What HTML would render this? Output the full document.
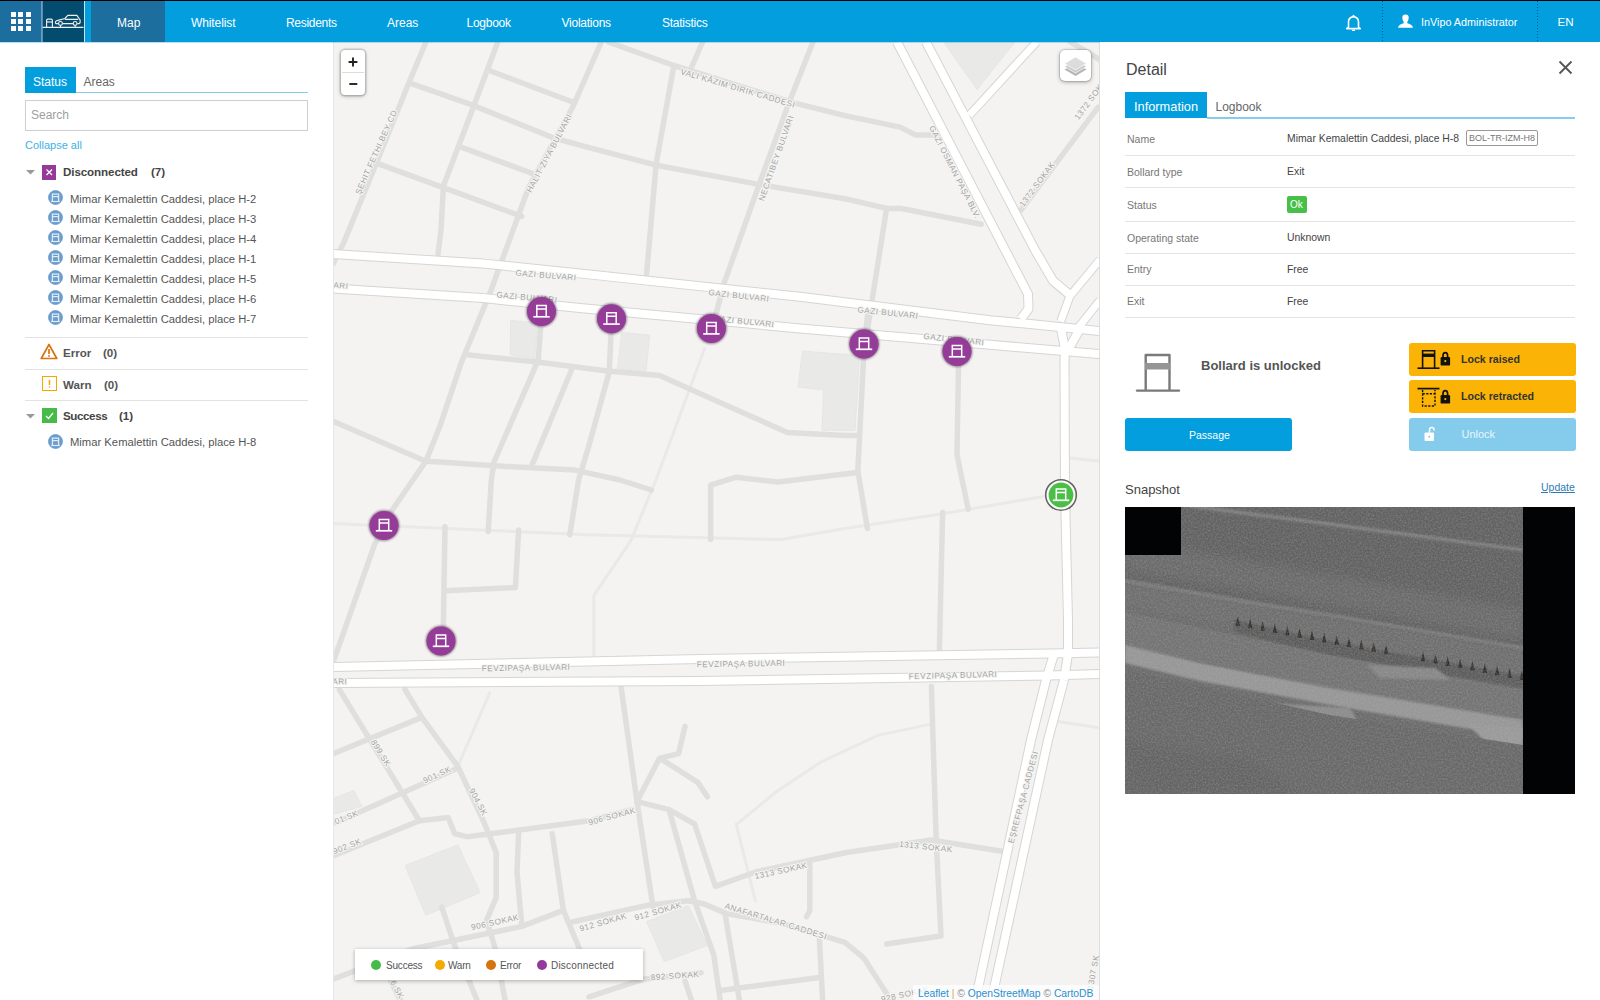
<!DOCTYPE html>
<html><head><meta charset="utf-8">
<style>
*{margin:0;padding:0;box-sizing:border-box}
html,body{width:1600px;height:1000px;overflow:hidden;background:#fff;font-family:"Liberation Sans", sans-serif;color:#444}
.abs{position:absolute}
.t{position:absolute;white-space:nowrap}
</style></head><body>
<div class="abs" style="left:0px;top:0px;width:1600px;height:1px;background:#000"></div>
<div class="abs" style="left:0px;top:1px;width:1600px;height:41px;background:#029ede"></div>
<div class="abs" style="left:0px;top:1px;width:41px;height:41px;background:#1b6e9e"></div>
<div class="abs" style="left:41px;top:1px;width:43px;height:41px;background:#034c70"></div>
<div class="abs" style="left:84px;top:1px;width:1px;height:41px;background:#cfe3ee"></div>
<div class="abs" style="left:91px;top:1px;width:74px;height:41px;background:#1b6e9e"></div>
<div class="abs" style="left:11.0px;top:11.5px;width:5px;height:5px;background:#fff"></div>
<div class="abs" style="left:18.4px;top:11.5px;width:5px;height:5px;background:#fff"></div>
<div class="abs" style="left:25.8px;top:11.5px;width:5px;height:5px;background:#fff"></div>
<div class="abs" style="left:11.0px;top:18.8px;width:5px;height:5px;background:#fff"></div>
<div class="abs" style="left:18.4px;top:18.8px;width:5px;height:5px;background:#fff"></div>
<div class="abs" style="left:25.8px;top:18.8px;width:5px;height:5px;background:#fff"></div>
<div class="abs" style="left:11.0px;top:26.1px;width:5px;height:5px;background:#fff"></div>
<div class="abs" style="left:18.4px;top:26.1px;width:5px;height:5px;background:#fff"></div>
<div class="abs" style="left:25.8px;top:26.1px;width:5px;height:5px;background:#fff"></div>
<svg class="abs" style="left:41px;top:1px" width="43" height="41" viewBox="0 0 43 41">
<rect x="0" y="0" width="1.8" height="41" fill="#6d9cc4"/>
<g fill="none" stroke="#eee" stroke-width="1.15" stroke-linejoin="round">
<path d="M5.6 26 V19.3 Q5.6 18.1 6.8 18.1 H10.2 Q11.4 18.1 11.4 19.3 V26"/>
<path d="M5.6 21 H11.4"/>
<path d="M17.6 22.6 H15.2 Q14.3 22.3 14.4 21 Q14.8 19.9 16 19.6 L23.9 17.5 L26.8 14.4 H35.9 L39.1 19 Q39.6 21.8 38.3 22.6 H36.2"/>
<path d="M23.9 18.4 H37.2 M21.5 22.6 H32"/>
<circle cx="19.5" cy="22.4" r="1.9"/><circle cx="34.1" cy="22.4" r="1.9"/>
<path d="M19.5 24.3 V26 M34.1 24.3 V26"/>
<path d="M1.5 26.3 H42.5" stroke-width="1.3"/>
</g></svg>
<div class="t" style="left:117px;top:17.04px;font-size:12px;line-height:12px;color:#fff;font-weight:400;">Map</div>
<div class="t" style="left:191px;top:17.04px;font-size:12px;line-height:12px;color:#fff;font-weight:400;letter-spacing:-0.1px">Whitelist</div>
<div class="t" style="left:286px;top:17.04px;font-size:12px;line-height:12px;color:#fff;font-weight:400;letter-spacing:-0.3px">Residents</div>
<div class="t" style="left:387px;top:17.04px;font-size:12px;line-height:12px;color:#fff;font-weight:400;">Areas</div>
<div class="t" style="left:466.5px;top:17.04px;font-size:12px;line-height:12px;color:#fff;font-weight:400;letter-spacing:-0.25px">Logbook</div>
<div class="t" style="left:561.5px;top:17.04px;font-size:12px;line-height:12px;color:#fff;font-weight:400;letter-spacing:-0.25px">Violations</div>
<div class="t" style="left:662px;top:17.04px;font-size:12px;line-height:12px;color:#fff;font-weight:400;letter-spacing:-0.25px">Statistics</div>
<div class="abs" style="left:1382px;top:1px;width:1px;height:41px;background:repeating-linear-gradient(to bottom,rgba(0,40,80,.55) 0 1px,transparent 1px 3px)"></div>
<div class="abs" style="left:1537px;top:1px;width:1px;height:41px;background:repeating-linear-gradient(to bottom,rgba(0,40,80,.55) 0 1px,transparent 1px 3px)"></div>
<svg class="abs" style="left:1345px;top:13px" width="17" height="19" viewBox="0 0 17 19">
<path d="M3.5 14.2 V9 Q3.5 4.2 8.5 3.6 Q13.5 4.2 13.5 9 V14.2 L15.3 15.6 H1.7 Z" fill="none" stroke="#fff" stroke-width="1.6" stroke-linejoin="round"/>
<circle cx="8.5" cy="2.8" r="1" fill="#fff"/>
<rect x="7" y="16.6" width="3" height="1.4" fill="#fff"/>
</svg>
<svg class="abs" style="left:1397px;top:14px" width="17" height="15" viewBox="0 0 17 15">
<path d="M5.3 3.5 Q5.3 0.5 8.5 0.5 Q11.7 0.5 11.7 3.5 Q11.7 6.5 10.3 8 V9.2 Q15.5 10.3 16 13.8 H1 Q1.5 10.3 6.7 9.2 V8 Q5.3 6.5 5.3 3.5 Z" fill="#fff"/>
</svg>
<div class="t" style="left:1421px;top:16.66px;font-size:10.8px;line-height:10.8px;color:#fff;font-weight:400;">InVipo Administrator</div>
<div class="t" style="left:1557.5px;top:15.68px;font-size:11.6px;line-height:11.6px;color:#fff;font-weight:400;">EN</div>
<div class="abs" style="left:0px;top:42px;width:333px;height:958px;background:#fff"></div>
<div class="abs" style="left:24.5px;top:67px;width:51px;height:26px;background:#029ede"></div>
<div class="t" style="left:33px;top:75.84px;font-size:12px;line-height:12px;color:#fff;font-weight:400;">Status</div>
<div class="t" style="left:83.5px;top:75.84px;font-size:12px;line-height:12px;color:#666;font-weight:400;">Areas</div>
<div class="abs" style="left:75.5px;top:92px;width:232px;height:1px;background:#86cdeb"></div>
<div class="abs" style="left:24.5px;top:100px;width:283px;height:31px;border:1px solid #cfcfcf;background:#fff"></div>
<div class="t" style="left:31px;top:108.84px;font-size:12px;line-height:12px;color:#a0a0a0;font-weight:400;">Search</div>
<div class="t" style="left:25px;top:139.69px;font-size:11px;line-height:11px;color:#3eb1e3;font-weight:400;">Collapse all</div>
<svg class="abs" style="left:26px;top:170px" width="9" height="5"><path d="M0 0 H9 L4.5 4.5 Z" fill="#999"/></svg>
<div class="abs" style="left:41.5px;top:165px;width:14.5px;height:14.5px;background:#933a9a"></div>
<svg class="abs" style="left:41.5px;top:165px" width="15" height="15"><path d="M4.5 4.5 L10 10 M10 4.5 L4.5 10" stroke="#fff" stroke-width="1.3"/></svg>
<div class="t" style="left:63px;top:166.18px;font-size:11.6px;line-height:11.6px;color:#444;font-weight:700;letter-spacing:-0.1px">Disconnected</div>
<div class="t" style="left:151px;top:166.18px;font-size:11.6px;line-height:11.6px;color:#444;font-weight:700;">(7)</div>
<svg class="abs" style="left:48.1px;top:190.3px" width="15" height="15" viewBox="0 0 15 15">
<circle cx="7.5" cy="7.5" r="7" fill="#6d9cca" stroke="#5a95d0" stroke-width=".7"/>
<path d="M4.4 11.2 V4.2 H10.6 V11.2 M4.4 6.6 H10.6" fill="none" stroke="#dcecf8" stroke-width="1.3"/>
<path d="M3.2 11.5 H11.8" stroke="#dcecf8" stroke-width="1.2"/>
</svg>
<div class="t" style="left:70px;top:193.98px;font-size:11.25px;line-height:11.25px;color:#555;font-weight:400;">Mimar Kemalettin Caddesi, place H-2</div>
<svg class="abs" style="left:48.1px;top:210.3px" width="15" height="15" viewBox="0 0 15 15">
<circle cx="7.5" cy="7.5" r="7" fill="#6d9cca" stroke="#5a95d0" stroke-width=".7"/>
<path d="M4.4 11.2 V4.2 H10.6 V11.2 M4.4 6.6 H10.6" fill="none" stroke="#dcecf8" stroke-width="1.3"/>
<path d="M3.2 11.5 H11.8" stroke="#dcecf8" stroke-width="1.2"/>
</svg>
<div class="t" style="left:70px;top:213.98px;font-size:11.25px;line-height:11.25px;color:#555;font-weight:400;">Mimar Kemalettin Caddesi, place H-3</div>
<svg class="abs" style="left:48.1px;top:230.3px" width="15" height="15" viewBox="0 0 15 15">
<circle cx="7.5" cy="7.5" r="7" fill="#6d9cca" stroke="#5a95d0" stroke-width=".7"/>
<path d="M4.4 11.2 V4.2 H10.6 V11.2 M4.4 6.6 H10.6" fill="none" stroke="#dcecf8" stroke-width="1.3"/>
<path d="M3.2 11.5 H11.8" stroke="#dcecf8" stroke-width="1.2"/>
</svg>
<div class="t" style="left:70px;top:233.98px;font-size:11.25px;line-height:11.25px;color:#555;font-weight:400;">Mimar Kemalettin Caddesi, place H-4</div>
<svg class="abs" style="left:48.1px;top:250.3px" width="15" height="15" viewBox="0 0 15 15">
<circle cx="7.5" cy="7.5" r="7" fill="#6d9cca" stroke="#5a95d0" stroke-width=".7"/>
<path d="M4.4 11.2 V4.2 H10.6 V11.2 M4.4 6.6 H10.6" fill="none" stroke="#dcecf8" stroke-width="1.3"/>
<path d="M3.2 11.5 H11.8" stroke="#dcecf8" stroke-width="1.2"/>
</svg>
<div class="t" style="left:70px;top:253.98px;font-size:11.25px;line-height:11.25px;color:#555;font-weight:400;">Mimar Kemalettin Caddesi, place H-1</div>
<svg class="abs" style="left:48.1px;top:270.3px" width="15" height="15" viewBox="0 0 15 15">
<circle cx="7.5" cy="7.5" r="7" fill="#6d9cca" stroke="#5a95d0" stroke-width=".7"/>
<path d="M4.4 11.2 V4.2 H10.6 V11.2 M4.4 6.6 H10.6" fill="none" stroke="#dcecf8" stroke-width="1.3"/>
<path d="M3.2 11.5 H11.8" stroke="#dcecf8" stroke-width="1.2"/>
</svg>
<div class="t" style="left:70px;top:273.98px;font-size:11.25px;line-height:11.25px;color:#555;font-weight:400;">Mimar Kemalettin Caddesi, place H-5</div>
<svg class="abs" style="left:48.1px;top:290.3px" width="15" height="15" viewBox="0 0 15 15">
<circle cx="7.5" cy="7.5" r="7" fill="#6d9cca" stroke="#5a95d0" stroke-width=".7"/>
<path d="M4.4 11.2 V4.2 H10.6 V11.2 M4.4 6.6 H10.6" fill="none" stroke="#dcecf8" stroke-width="1.3"/>
<path d="M3.2 11.5 H11.8" stroke="#dcecf8" stroke-width="1.2"/>
</svg>
<div class="t" style="left:70px;top:293.98px;font-size:11.25px;line-height:11.25px;color:#555;font-weight:400;">Mimar Kemalettin Caddesi, place H-6</div>
<svg class="abs" style="left:48.1px;top:310.3px" width="15" height="15" viewBox="0 0 15 15">
<circle cx="7.5" cy="7.5" r="7" fill="#6d9cca" stroke="#5a95d0" stroke-width=".7"/>
<path d="M4.4 11.2 V4.2 H10.6 V11.2 M4.4 6.6 H10.6" fill="none" stroke="#dcecf8" stroke-width="1.3"/>
<path d="M3.2 11.5 H11.8" stroke="#dcecf8" stroke-width="1.2"/>
</svg>
<div class="t" style="left:70px;top:313.98px;font-size:11.25px;line-height:11.25px;color:#555;font-weight:400;">Mimar Kemalettin Caddesi, place H-7</div>
<div class="abs" style="left:24.5px;top:337px;width:283px;height:1px;background:#e3e3e3"></div>
<svg class="abs" style="left:40px;top:343px" width="18" height="17" viewBox="0 0 18 17"><path d="M9 1.5 L16.8 15.5 H1.2 Z" fill="none" stroke="#d9730d" stroke-width="1.7" stroke-linejoin="round"/><path d="M9 6 V11" stroke="#d9730d" stroke-width="1.7"/><circle cx="9" cy="13" r="0.9" fill="#d9730d"/></svg>
<div class="t" style="left:63px;top:346.78px;font-size:11.6px;line-height:11.6px;color:#555;font-weight:700;">Error</div>
<div class="t" style="left:103px;top:346.78px;font-size:11.6px;line-height:11.6px;color:#555;font-weight:700;">(0)</div>
<div class="abs" style="left:24.5px;top:368.5px;width:283px;height:1px;background:#e3e3e3"></div>
<div class="abs" style="left:41.5px;top:376px;width:15px;height:15px;border:1.7px solid #f5a700"></div>
<svg class="abs" style="left:41.5px;top:376px" width="15" height="15"><path d="M7.5 4 V9" stroke="#f5a700" stroke-width="1.5"/><circle cx="7.5" cy="11" r=".8" fill="#f5a700"/></svg>
<div class="t" style="left:63px;top:378.58px;font-size:11.6px;line-height:11.6px;color:#555;font-weight:700;">Warn</div>
<div class="t" style="left:104px;top:378.58px;font-size:11.6px;line-height:11.6px;color:#555;font-weight:700;">(0)</div>
<div class="abs" style="left:24.5px;top:400px;width:283px;height:1px;background:#e3e3e3"></div>
<svg class="abs" style="left:26px;top:414px" width="9" height="5"><path d="M0 0 H9 L4.5 4.5 Z" fill="#999"/></svg>
<div class="abs" style="left:41.5px;top:408px;width:15px;height:15px;background:#47bb47"></div>
<svg class="abs" style="left:41.5px;top:408px" width="15" height="15"><path d="M4 8 L6.5 10.5 L11 5" fill="none" stroke="#fff" stroke-width="1.3"/></svg>
<div class="t" style="left:63px;top:410.48px;font-size:11.6px;line-height:11.6px;color:#444;font-weight:700;letter-spacing:-0.4px">Success</div>
<div class="t" style="left:119px;top:410.48px;font-size:11.6px;line-height:11.6px;color:#444;font-weight:700;">(1)</div>
<svg class="abs" style="left:48.0px;top:434.1px" width="15" height="15" viewBox="0 0 15 15">
<circle cx="7.5" cy="7.5" r="7" fill="#6d9cca" stroke="#5a95d0" stroke-width=".7"/>
<path d="M4.4 11.2 V4.2 H10.6 V11.2 M4.4 6.6 H10.6" fill="none" stroke="#dcecf8" stroke-width="1.3"/>
<path d="M3.2 11.5 H11.8" stroke="#dcecf8" stroke-width="1.2"/>
</svg>
<div class="t" style="left:70px;top:437.48px;font-size:11.25px;line-height:11.25px;color:#555;font-weight:400;">Mimar Kemalettin Caddesi, place H-8</div>
<div id="map" class="abs" style="left:333px;top:42px;width:766px;height:958px;background:#f4f3f1;overflow:hidden">
<svg class="abs" style="left:0;top:0" width="766" height="958" viewBox="333 42 766 958">
<polygon points="510.6,320.4 537.8,323 534.5,358.5 510.2,354.9" fill="#e9e9e7" stroke="#e3e3e1" stroke-width="0.8"/>
<polygon points="621.8,332.4 649.7,335.1 646.1,371.1 617.3,369.3" fill="#e9e9e7" stroke="#e3e3e1" stroke-width="0.8"/>
<polygon points="802.5,351 859.5,355.5 855,430.5 822,430.5 823.5,390 798,387" fill="#e9e9e7" stroke="#e3e3e1" stroke-width="0.8"/>
<polygon points="943.6,42 1014.9,42 977.2,89.5" fill="#e9e9e7" stroke="#e3e3e1" stroke-width="0.8"/>
<polygon points="405,865.6 457.8,844.8 480.2,892.8 425.8,915.2" fill="#e9e9e7" stroke="#e3e3e1" stroke-width="0.8"/>
<polygon points="333,798.4 353.8,790.4 361.8,806.4 333,814.4" fill="#e9e9e7" stroke="#e3e3e1" stroke-width="0.8"/>
<polygon points="646.6,921.6 688.2,905.6 707.4,945.6 664.2,961.6" fill="#e9e9e7" stroke="#e3e3e1" stroke-width="0.8"/>
<polyline points="333,523.6 589,534.8 781,539.6 845,528.4 941,514 1043.4,496.4" fill="none" stroke="#e9e9e7" stroke-width="3" stroke-linejoin="round" stroke-linecap="round"/>
<polyline points="704.6,348.6 656,480 630.6,541.2 593.8,595.6 593.8,656.4" fill="none" stroke="#e9e9e7" stroke-width="3" stroke-linejoin="round" stroke-linecap="round"/>
<polyline points="489.8,692.8 457.8,766.4" fill="none" stroke="#e9e9e7" stroke-width="3" stroke-linejoin="round" stroke-linecap="round"/>
<polyline points="736.2,824 755.4,900.8" fill="none" stroke="#e9e9e7" stroke-width="3" stroke-linejoin="round" stroke-linecap="round"/>
<polyline points="737.4,823.6 777,791.2 820.2,762.4 877.9,735.4 928.3,724.6" fill="none" stroke="#e9e9e7" stroke-width="3" stroke-linejoin="round" stroke-linecap="round"/>
<polyline points="1069,458 1101,461.2" fill="none" stroke="#e9e9e7" stroke-width="3" stroke-linejoin="round" stroke-linecap="round"/>
<polyline points="1057.8,721.6 1101,728" fill="none" stroke="#e9e9e7" stroke-width="3" stroke-linejoin="round" stroke-linecap="round"/>
<polyline points="426,42 408,85 376,164 343.8,242.6 333,264" fill="none" stroke="#dfdfdd" stroke-width="5.5" stroke-linejoin="round" stroke-linecap="round"/>
<polyline points="497.8,42 473.8,106 443.4,186 441,230 438,254" fill="none" stroke="#dfdfdd" stroke-width="5.5" stroke-linejoin="round" stroke-linecap="round"/>
<polyline points="601.3,42 573,106.5 529,186.5 490.4,292 461.5,362 440,426 425.8,461.2 390.6,512.4 374.6,544.4 341,640 333.6,660.6" fill="none" stroke="#dfdfdd" stroke-width="5.5" stroke-linejoin="round" stroke-linecap="round"/>
<polyline points="489.8,70.8 574.6,102.8" fill="none" stroke="#dfdfdd" stroke-width="5.5" stroke-linejoin="round" stroke-linecap="round"/>
<polyline points="411.4,83.6 470.6,104.4 553.8,138 589,147.6 656.2,165.2 758.6,184.4 845,198.8 886.6,208.4 900,208.3 981.2,224.2" fill="none" stroke="#dfdfdd" stroke-width="5.5" stroke-linejoin="round" stroke-linecap="round"/>
<polyline points="462.6,147.6 531.4,173.2" fill="none" stroke="#dfdfdd" stroke-width="5.5" stroke-linejoin="round" stroke-linecap="round"/>
<polyline points="377.8,163.6 443.4,187.6 521.8,216.4" fill="none" stroke="#dfdfdd" stroke-width="5.5" stroke-linejoin="round" stroke-linecap="round"/>
<polyline points="608.2,42 675.4,66 793.8,102.8 845,115.6 900,127.1 915.8,135.1 937.6,135.1" fill="none" stroke="#dfdfdd" stroke-width="5.5" stroke-linejoin="round" stroke-linecap="round"/>
<polyline points="702.6,42 691.4,67.6" fill="none" stroke="#dfdfdd" stroke-width="5.5" stroke-linejoin="round" stroke-linecap="round"/>
<polyline points="673.8,66 656.2,163.6 646.6,274" fill="none" stroke="#dfdfdd" stroke-width="5.5" stroke-linejoin="round" stroke-linecap="round"/>
<polyline points="813,42 789,102.8 758.6,186 723.4,285.2 715,318" fill="none" stroke="#dfdfdd" stroke-width="5.5" stroke-linejoin="round" stroke-linecap="round"/>
<polyline points="886.6,208.4 867.4,330" fill="none" stroke="#dfdfdd" stroke-width="5.5" stroke-linejoin="round" stroke-linecap="round"/>
<polyline points="1098,107.3 1020.8,210.3" fill="none" stroke="#dfdfdd" stroke-width="5.5" stroke-linejoin="round" stroke-linecap="round"/>
<polyline points="1070.3,42 1100,59.8" fill="none" stroke="#dfdfdd" stroke-width="5.5" stroke-linejoin="round" stroke-linecap="round"/>
<polyline points="540.8,325.2 538.1,361.2 535.4,366.6 494,462 491.3,480 488.2,531.6" fill="none" stroke="#dfdfdd" stroke-width="5.5" stroke-linejoin="round" stroke-linecap="round"/>
<polyline points="571.4,370.2 531.8,465.6" fill="none" stroke="#dfdfdd" stroke-width="5.5" stroke-linejoin="round" stroke-linecap="round"/>
<polyline points="611,334.2 609.2,372 589,445.2 578.6,480 569.8,534.8" fill="none" stroke="#dfdfdd" stroke-width="5.5" stroke-linejoin="round" stroke-linecap="round"/>
<polyline points="468.8,354.9 537.2,362.1 607.4,371.1 659.6,375.6 720,402.6 787.4,432.4 845,435.6 857.8,435.6" fill="none" stroke="#dfdfdd" stroke-width="5.5" stroke-linejoin="round" stroke-linecap="round"/>
<polyline points="333,421.2 425.8,461.2 440,462 490.4,465.6 575,470.1 620,480 651.4,490" fill="none" stroke="#dfdfdd" stroke-width="5.5" stroke-linejoin="round" stroke-linecap="round"/>
<polyline points="445,526.8 443.4,624.4" fill="none" stroke="#dfdfdd" stroke-width="5.5" stroke-linejoin="round" stroke-linecap="round"/>
<polyline points="445,590.8 515.4,587.6 518.6,530" fill="none" stroke="#dfdfdd" stroke-width="5.5" stroke-linejoin="round" stroke-linecap="round"/>
<polyline points="710.6,539.6 710.6,485.2 736.2,477.2 777.8,482 845,474 857.8,472.4" fill="none" stroke="#dfdfdd" stroke-width="5.5" stroke-linejoin="round" stroke-linecap="round"/>
<polyline points="867.7,314.2 866.2,327.7" fill="none" stroke="#dfdfdd" stroke-width="5.5" stroke-linejoin="round" stroke-linecap="round"/>
<polyline points="864,350 857.8,470.8 867.4,528.4" fill="none" stroke="#dfdfdd" stroke-width="5.5" stroke-linejoin="round" stroke-linecap="round"/>
<polyline points="958.6,360 957,454.8 968.2,509.2" fill="none" stroke="#dfdfdd" stroke-width="5.5" stroke-linejoin="round" stroke-linecap="round"/>
<polyline points="942.6,512.4 939.4,650" fill="none" stroke="#dfdfdd" stroke-width="5.5" stroke-linejoin="round" stroke-linecap="round"/>
<polyline points="339.4,689.6 419.4,820.8" fill="none" stroke="#dfdfdd" stroke-width="5.5" stroke-linejoin="round" stroke-linecap="round"/>
<polyline points="405,689.6 422.6,718.4 457.8,766.4 483.4,820.8 496.2,852.8 496.2,897.6 486.6,920 496.2,952 505,1000" fill="none" stroke="#dfdfdd" stroke-width="5.5" stroke-linejoin="round" stroke-linecap="round"/>
<polyline points="333,753.6 419.4,718.4" fill="none" stroke="#dfdfdd" stroke-width="5.5" stroke-linejoin="round" stroke-linecap="round"/>
<polyline points="333,824 454.6,769.6" fill="none" stroke="#dfdfdd" stroke-width="5.5" stroke-linejoin="round" stroke-linecap="round"/>
<polyline points="333,856 419.4,820.8 448.2,817.6 454.6,833.6 467.4,836.8 589,820.8 630.6,809.6" fill="none" stroke="#dfdfdd" stroke-width="5.5" stroke-linejoin="round" stroke-linecap="round"/>
<polyline points="518.6,833.6 517,872 521.8,926.4" fill="none" stroke="#dfdfdd" stroke-width="5.5" stroke-linejoin="round" stroke-linecap="round"/>
<polyline points="552.2,833.6 563.4,910.4 579.4,948.8 590,975" fill="none" stroke="#dfdfdd" stroke-width="5.5" stroke-linejoin="round" stroke-linecap="round"/>
<polyline points="333,979.2 413,948.8 521.8,926.4 563.4,910.4" fill="none" stroke="#dfdfdd" stroke-width="5.5" stroke-linejoin="round" stroke-linecap="round"/>
<polyline points="441.8,907.2 454.6,945.6 477,1000" fill="none" stroke="#dfdfdd" stroke-width="5.5" stroke-linejoin="round" stroke-linecap="round"/>
<polyline points="390.6,980.8 400.2,1000" fill="none" stroke="#dfdfdd" stroke-width="5.5" stroke-linejoin="round" stroke-linecap="round"/>
<polyline points="621,686.4 637,801.6 653,907.2" fill="none" stroke="#dfdfdd" stroke-width="5.5" stroke-linejoin="round" stroke-linecap="round"/>
<polyline points="685,980.8 691.4,1000" fill="none" stroke="#dfdfdd" stroke-width="5.5" stroke-linejoin="round" stroke-linecap="round"/>
<polyline points="637,801.6 659.4,758.4 678.6,753.6 685,726.4" fill="none" stroke="#dfdfdd" stroke-width="5.5" stroke-linejoin="round" stroke-linecap="round"/>
<polyline points="662.6,760 697.8,782.4 707.4,796.8" fill="none" stroke="#dfdfdd" stroke-width="5.5" stroke-linejoin="round" stroke-linecap="round"/>
<polyline points="637,801.6 669,809.6 694.6,824 715.4,886.4 755.4,872 845,852.8 931.4,840 1001.8,851.2" fill="none" stroke="#dfdfdd" stroke-width="5.5" stroke-linejoin="round" stroke-linecap="round"/>
<polyline points="669,809.6 694.6,900.8 713.8,955.2 720.2,1000" fill="none" stroke="#dfdfdd" stroke-width="5.5" stroke-linejoin="round" stroke-linecap="round"/>
<polyline points="573,921.7 649.4,904.9 688.2,900.8 704.2,904 726.6,913.6 781,923.2 845,942.4 864.2,958.4 886.6,993.6" fill="none" stroke="#dfdfdd" stroke-width="5.5" stroke-linejoin="round" stroke-linecap="round"/>
<polyline points="725,913.6 739.4,1000" fill="none" stroke="#dfdfdd" stroke-width="5.5" stroke-linejoin="round" stroke-linecap="round"/>
<polyline points="809.8,862.4 809.8,910.4 806.6,916.8" fill="none" stroke="#dfdfdd" stroke-width="5.5" stroke-linejoin="round" stroke-linecap="round"/>
<polyline points="819.4,939.2 822.6,1000" fill="none" stroke="#dfdfdd" stroke-width="5.5" stroke-linejoin="round" stroke-linecap="round"/>
<polyline points="589,996.8 643.4,979.2 701,972.8" fill="none" stroke="#dfdfdd" stroke-width="5.5" stroke-linejoin="round" stroke-linecap="round"/>
<polyline points="720.2,990.4 819.4,977.6" fill="none" stroke="#dfdfdd" stroke-width="5.5" stroke-linejoin="round" stroke-linecap="round"/>
<polyline points="931.4,686.4 936.2,840 941,936 886.6,944" fill="none" stroke="#dfdfdd" stroke-width="5.5" stroke-linejoin="round" stroke-linecap="round"/>
<polyline points="333,254 483,263.6 580,273.4 800,296.8 990,320.3 1030,324 1100,331" fill="none" stroke="#d5d5d3" stroke-width="10" stroke-linejoin="round"/>
<polyline points="333,288.5 483,298.1 580,308 800,328.4 990,344.8 1100,354" fill="none" stroke="#d5d5d3" stroke-width="10" stroke-linejoin="round"/>
<polyline points="897,42 1028,294 1028.5,308.8 1020.8,319" fill="none" stroke="#d5d5d3" stroke-width="10" stroke-linejoin="round"/>
<polyline points="926,42 1035,250 1053,280.8 1069.8,294.8" fill="none" stroke="#d5d5d3" stroke-width="10" stroke-linejoin="round"/>
<polyline points="1036.6,42 969.3,115.3" fill="none" stroke="#d5d5d3" stroke-width="9" stroke-linejoin="round"/>
<polyline points="1060.7,321.4 1069.8,296.2 1100,259.8" fill="none" stroke="#d5d5d3" stroke-width="9" stroke-linejoin="round"/>
<polyline points="1075.4,331.2 1100,300.4" fill="none" stroke="#d5d5d3" stroke-width="9" stroke-linejoin="round"/>
<polyline points="1060.5,326 1065,349 1064.5,362 1065,494 1068,620 1068,654 1064,680" fill="none" stroke="#d5d5d3" stroke-width="10" stroke-linejoin="round"/>
<polyline points="1081,327 1067,352" fill="none" stroke="#d5d5d3" stroke-width="10" stroke-linejoin="round"/>
<polyline points="333,667 700,659 1050,653.5 1100,652.5" fill="none" stroke="#d5d5d3" stroke-width="10" stroke-linejoin="round"/>
<polyline points="333,683 700,681 1050,675.5 1100,674" fill="none" stroke="#d5d5d3" stroke-width="10" stroke-linejoin="round"/>
<polyline points="1054,654 1046,680 1031,740 979,984 975,1000" fill="none" stroke="#d5d5d3" stroke-width="10" stroke-linejoin="round"/>
<polyline points="1064,680 1048,740 995,984 991,1000" fill="none" stroke="#d5d5d3" stroke-width="10" stroke-linejoin="round"/>
<polyline points="333,254 483,263.6 580,273.4 800,296.8 990,320.3 1030,324 1100,331" fill="none" stroke="#fff" stroke-width="8" stroke-linejoin="round"/>
<polyline points="333,288.5 483,298.1 580,308 800,328.4 990,344.8 1100,354" fill="none" stroke="#fff" stroke-width="8" stroke-linejoin="round"/>
<polyline points="897,42 1028,294 1028.5,308.8 1020.8,319" fill="none" stroke="#fff" stroke-width="8" stroke-linejoin="round"/>
<polyline points="926,42 1035,250 1053,280.8 1069.8,294.8" fill="none" stroke="#fff" stroke-width="8" stroke-linejoin="round"/>
<polyline points="1036.6,42 969.3,115.3" fill="none" stroke="#fff" stroke-width="7" stroke-linejoin="round"/>
<polyline points="1060.7,321.4 1069.8,296.2 1100,259.8" fill="none" stroke="#fff" stroke-width="7" stroke-linejoin="round"/>
<polyline points="1075.4,331.2 1100,300.4" fill="none" stroke="#fff" stroke-width="7" stroke-linejoin="round"/>
<polyline points="1060.5,326 1065,349 1064.5,362 1065,494 1068,620 1068,654 1064,680" fill="none" stroke="#fff" stroke-width="8" stroke-linejoin="round"/>
<polyline points="1081,327 1067,352" fill="none" stroke="#fff" stroke-width="8" stroke-linejoin="round"/>
<polyline points="333,667 700,659 1050,653.5 1100,652.5" fill="none" stroke="#fff" stroke-width="8" stroke-linejoin="round"/>
<polyline points="333,683 700,681 1050,675.5 1100,674" fill="none" stroke="#fff" stroke-width="8" stroke-linejoin="round"/>
<polyline points="1054,654 1046,680 1031,740 979,984 975,1000" fill="none" stroke="#fff" stroke-width="8" stroke-linejoin="round"/>
<polyline points="1064,680 1048,740 995,984 991,1000" fill="none" stroke="#fff" stroke-width="8" stroke-linejoin="round"/>
<g font-family="Liberation Sans, sans-serif" font-size="8.2" fill="#a3a3a3" letter-spacing="0.5" text-anchor="middle" stroke="#f5f5f3" stroke-width="2.2" paint-order="stroke" stroke-linejoin="round">
<text transform="translate(376,152) rotate(-66)" y="3">ŞEHIT FETHI BEY CD</text>
<text transform="translate(549,153) rotate(-62)" y="3">HALIT ZIYA BULVARI</text>
<text transform="translate(738,88) rotate(16.5)" y="3">VALI KÂZIM DIRIK CADDESI</text>
<text transform="translate(776,158) rotate(-70.5)" y="3">NECATIBEY BULVARI</text>
<text transform="translate(955,172) rotate(63)" y="3">GAZI OSMAN PAŞA BLV.</text>
<text transform="translate(1037,184) rotate(-53.5)" y="3">1372 SOKAK</text>
<text transform="translate(1092,97) rotate(-53.5)" y="3">1372 SOKAK</text>
<text transform="translate(546,275) rotate(4.5)" y="3">GAZI BULVARI</text>
<text transform="translate(527,297) rotate(5)" y="3">GAZI BULVARI</text>
<text transform="translate(739,295.5) rotate(6.3)" y="3">GAZI BULVARI</text>
<text transform="translate(744,321) rotate(6)" y="3">GAZI BULVARI</text>
<text transform="translate(888,312.5) rotate(6)" y="3">GAZI BULVARI</text>
<text transform="translate(954,339) rotate(6)" y="3">GAZI BULVARI</text>
<text transform="translate(526,667.5) rotate(-1)" y="3">FEVZIPAŞA BULVARI</text>
<text transform="translate(741,663.5) rotate(-1)" y="3">FEVZIPAŞA BULVARI</text>
<text transform="translate(953,675) rotate(-1.5)" y="3">FEVZIPAŞA BULVARI</text>
<text transform="translate(1023,797) rotate(-75)" y="3">EŞREFPAŞA CADDESI</text>
<text transform="translate(926,846.5) rotate(6)" y="3">1313 SOKAK</text>
<text transform="translate(781,870.5) rotate(-12)" y="3">1313 SOKAK</text>
<text transform="translate(776,921) rotate(17)" y="3">ANAFARTALAR CADDESI</text>
<text transform="translate(495,922) rotate(-12)" y="3">906 SOKAK</text>
<text transform="translate(612,816) rotate(-15)" y="3">906 SOKAK</text>
<text transform="translate(658,911) rotate(-16)" y="3">912 SOKAK</text>
<text transform="translate(603,922) rotate(-16)" y="3">912 SOKAK</text>
<text transform="translate(675,975.5) rotate(-4)" y="3">892 SOKAK</text>
<text transform="translate(381,753) rotate(58)" y="3">899 SK</text>
<text transform="translate(437,774.5) rotate(-25)" y="3">901 SK</text>
<text transform="translate(478.5,802) rotate(62)" y="3">904 SK</text>
<text transform="translate(347,846) rotate(-22)" y="3">902 SK</text>
<text transform="translate(344,818) rotate(-22)" y="3">901 SK</text>
<text transform="translate(905,994) rotate(-12)" y="3">928 SOKAK</text>
<text transform="translate(318,283.5) rotate(4.5)" y="3">GAZI BULVARI</text>
<text transform="translate(303,681.5) rotate(-0.5)" y="3">FEVZIPAŞA BULVARI</text>
<text transform="translate(1093,972) rotate(-80)" y="3">1307 SK</text>
<text transform="translate(395,985) rotate(62)" y="3">876 SK</text>
</g>
<defs><filter id="mshadow" x="-50%" y="-50%" width="200%" height="200%"><feGaussianBlur stdDeviation="0.8"/></filter></defs><circle cx="541.5" cy="311.5" r="15.2" fill="rgba(40,20,40,0.55)" filter="url(#mshadow)"/>
<circle cx="541.5" cy="311.5" r="14.5" fill="#943c98"/>
<path d="M536.8 316.5 V305.5 H546.2 V316.5 M536.8 308.9 H546.2" fill="none" stroke="#fff" stroke-width="1.5"/><path d="M533.3 316.8 H549.7" stroke="#fff" stroke-width="1.7"/>
<circle cx="611.5" cy="318.8" r="15.2" fill="rgba(40,20,40,0.55)" filter="url(#mshadow)"/>
<circle cx="611.5" cy="318.8" r="14.5" fill="#943c98"/>
<path d="M606.8 323.8 V312.8 H616.2 V323.8 M606.8 316.2 H616.2" fill="none" stroke="#fff" stroke-width="1.5"/><path d="M603.3 324.1 H619.7" stroke="#fff" stroke-width="1.7"/>
<circle cx="711.4" cy="328.6" r="15.2" fill="rgba(40,20,40,0.55)" filter="url(#mshadow)"/>
<circle cx="711.4" cy="328.6" r="14.5" fill="#943c98"/>
<path d="M706.6999999999999 333.6 V322.6 H716.1 V333.6 M706.6999999999999 326.0 H716.1" fill="none" stroke="#fff" stroke-width="1.5"/><path d="M703.1999999999999 333.90000000000003 H719.6" stroke="#fff" stroke-width="1.7"/>
<circle cx="864" cy="344" r="15.2" fill="rgba(40,20,40,0.55)" filter="url(#mshadow)"/>
<circle cx="864" cy="344" r="14.5" fill="#943c98"/>
<path d="M859.3 349 V338 H868.7 V349 M859.3 341.4 H868.7" fill="none" stroke="#fff" stroke-width="1.5"/><path d="M855.8 349.3 H872.2" stroke="#fff" stroke-width="1.7"/>
<circle cx="957" cy="351.5" r="15.2" fill="rgba(40,20,40,0.55)" filter="url(#mshadow)"/>
<circle cx="957" cy="351.5" r="14.5" fill="#943c98"/>
<path d="M952.3 356.5 V345.5 H961.7 V356.5 M952.3 348.9 H961.7" fill="none" stroke="#fff" stroke-width="1.5"/><path d="M948.8 356.8 H965.2" stroke="#fff" stroke-width="1.7"/>
<circle cx="384" cy="525.5" r="15.2" fill="rgba(40,20,40,0.55)" filter="url(#mshadow)"/>
<circle cx="384" cy="525.5" r="14.5" fill="#943c98"/>
<path d="M379.3 530.5 V519.5 H388.7 V530.5 M379.3 522.9 H388.7" fill="none" stroke="#fff" stroke-width="1.5"/><path d="M375.8 530.8 H392.2" stroke="#fff" stroke-width="1.7"/>
<circle cx="441" cy="641" r="15.2" fill="rgba(40,20,40,0.55)" filter="url(#mshadow)"/>
<circle cx="441" cy="641" r="14.5" fill="#943c98"/>
<path d="M436.3 646 V635 H445.7 V646 M436.3 638.4 H445.7" fill="none" stroke="#fff" stroke-width="1.5"/><path d="M432.8 646.3 H449.2" stroke="#fff" stroke-width="1.7"/>
<circle cx="1061" cy="495" r="15.3" fill="#fff" stroke="#666" stroke-width="1.6"/>
<circle cx="1061" cy="495" r="12.4" fill="#4bbf45"/>
<path d="M1056.3 500 V489 H1065.7 V500 M1056.3 492.4 H1065.7" fill="none" stroke="#fff" stroke-width="1.5"/><path d="M1052.8 500.3 H1069.2" stroke="#fff" stroke-width="1.7"/>
</svg>
</div>
<div class="abs" style="left:1099px;top:42px;width:1px;height:958px;background:#dedede"></div>
<div class="abs" style="left:333px;top:42px;width:1px;height:958px;background:#e7e7e7"></div>
<div class="abs" style="left:0px;top:42px;width:1600px;height:1px;background:rgba(2,158,222,.3)"></div>
<div class="abs" style="left:341px;top:50px;width:24px;height:45px;background:#fff;border-radius:4px;box-shadow:0 0 0 1.5px rgba(0,0,0,.13),0 1px 4px rgba(0,0,0,.3)"></div>
<div class="abs" style="left:342px;top:72px;width:22px;height:1px;background:#dcdcdc"></div>
<svg class="abs" style="left:341px;top:50px" width="24" height="45"><path d="M7.6 12 H16.4 M12 7.6 V16.4" stroke="#222" stroke-width="1.9"/><path d="M8.3 34 H16.3" stroke="#222" stroke-width="1.9"/></svg>
<div class="abs" style="left:1060px;top:50px;width:31px;height:31px;background:#fff;border-radius:5px;box-shadow:0 0 0 1px rgba(0,0,0,.1),0 1px 4px rgba(0,0,0,.35)"></div>
<svg class="abs" style="left:1060px;top:50px" width="31" height="31" viewBox="0 0 31 31">
<path d="M4.5 19.5 L15.5 26 L26.5 19.5 L15.5 13 Z" fill="#b6b6b6"/>
<path d="M4.5 16.5 L15.5 23 L26.5 16.5 L15.5 10 Z" fill="#c9c9c9" stroke="#fff" stroke-width=".7"/>
<path d="M4.5 13.5 L15.5 20 L26.5 13.5 L15.5 7 Z" fill="#dcdcdc" stroke="#fff" stroke-width=".7"/>
</svg>
<div class="abs" style="left:355px;top:949px;width:288px;height:31px;background:#fff;box-shadow:0 1px 4px rgba(0,0,0,.3)"></div>
<div class="abs" style="left:371px;top:960px;width:10px;height:10px;background:#47bb47;border-radius:50%"></div>
<div class="abs" style="left:434.5px;top:960px;width:10px;height:10px;background:#f5aa00;border-radius:50%"></div>
<div class="abs" style="left:486px;top:960px;width:10px;height:10px;background:#d5730f;border-radius:50%"></div>
<div class="abs" style="left:536.5px;top:960px;width:10px;height:10px;background:#933a9a;border-radius:50%"></div>
<div class="t" style="left:386px;top:960.53px;font-size:10px;line-height:10px;color:#555;font-weight:400;letter-spacing:-0.2px">Success</div>
<div class="t" style="left:448px;top:960.53px;font-size:10px;line-height:10px;color:#555;font-weight:400;letter-spacing:-0.2px">Warn</div>
<div class="t" style="left:500px;top:960.53px;font-size:10px;line-height:10px;color:#555;font-weight:400;letter-spacing:-0.2px">Error</div>
<div class="t" style="left:551px;top:960.53px;font-size:10px;line-height:10px;color:#555;font-weight:400;letter-spacing:0.2px">Disconnected</div>
<div class="abs" style="left:913px;top:985px;width:186px;height:15px;background:rgba(255,255,255,.75)"></div>
<div class="t" style="left:918px;top:988.58px;font-size:10.3px;line-height:10.3px;color:#333;font-weight:400;"><span style="color:#2a8fd0">Leaflet</span> <span style="color:#d9a34a">|</span> <span style="color:#888">©</span> <span style="color:#2a8fd0">OpenStreetMap</span> <span style="color:#888">©</span> <span style="color:#2a8fd0">CartoDB</span></div>
<div class="abs" style="left:1100px;top:42px;width:500px;height:958px;background:#fff"></div>
<div class="t" style="left:1126px;top:61.66px;font-size:16px;line-height:16px;color:#444;font-weight:400;">Detail</div>
<svg class="abs" style="left:1557px;top:59px" width="17" height="17"><path d="M2.5 2.5 L14.5 14.5 M14.5 2.5 L2.5 14.5" stroke="#555" stroke-width="1.8"/></svg>
<div class="abs" style="left:1125px;top:92px;width:82px;height:26px;background:#029ede"></div>
<div class="t" style="left:1134px;top:100.66px;font-size:12.8px;line-height:12.8px;color:#fff;font-weight:400;">Information</div>
<div class="t" style="left:1215.5px;top:100.54px;font-size:12px;line-height:12px;color:#666;font-weight:400;">Logbook</div>
<div class="abs" style="left:1207px;top:117px;width:368px;height:1.5px;background:#86cdeb"></div>
<div class="t" style="left:1127px;top:133.71px;font-size:10.5px;line-height:10.5px;color:#777;font-weight:400;">Name</div>
<div class="t" style="left:1287px;top:133.90px;font-size:10.4px;line-height:10.4px;color:#444;font-weight:400;">Mimar Kemalettin Caddesi, place H-8</div>
<div class="abs" style="left:1125px;top:155px;width:450px;height:1.3px;background:#e4e4e4"></div>
<div class="t" style="left:1127px;top:166.51px;font-size:10.5px;line-height:10.5px;color:#777;font-weight:400;">Bollard type</div>
<div class="t" style="left:1287px;top:166.70px;font-size:10.4px;line-height:10.4px;color:#444;font-weight:400;">Exit</div>
<div class="abs" style="left:1125px;top:187px;width:450px;height:1.3px;background:#e4e4e4"></div>
<div class="t" style="left:1127px;top:199.61px;font-size:10.5px;line-height:10.5px;color:#777;font-weight:400;">Status</div>
<div class="abs" style="left:1125px;top:221px;width:450px;height:1.3px;background:#e4e4e4"></div>
<div class="t" style="left:1127px;top:233.11px;font-size:10.5px;line-height:10.5px;color:#777;font-weight:400;">Operating state</div>
<div class="t" style="left:1287px;top:233.30px;font-size:10.4px;line-height:10.4px;color:#444;font-weight:400;">Unknown</div>
<div class="abs" style="left:1125px;top:253px;width:450px;height:1.3px;background:#e4e4e4"></div>
<div class="t" style="left:1127px;top:264.41px;font-size:10.5px;line-height:10.5px;color:#777;font-weight:400;">Entry</div>
<div class="t" style="left:1287px;top:264.60px;font-size:10.4px;line-height:10.4px;color:#444;font-weight:400;">Free</div>
<div class="abs" style="left:1125px;top:285px;width:450px;height:1.3px;background:#e4e4e4"></div>
<div class="t" style="left:1127px;top:296.31px;font-size:10.5px;line-height:10.5px;color:#777;font-weight:400;">Exit</div>
<div class="t" style="left:1287px;top:296.50px;font-size:10.4px;line-height:10.4px;color:#444;font-weight:400;">Free</div>
<div class="abs" style="left:1125px;top:317px;width:450px;height:1.3px;background:#e4e4e4"></div>
<div class="abs" style="left:1465.5px;top:130px;width:72px;height:16px;border:1px solid #999;border-radius:2px"></div>
<div class="t" style="left:1469px;top:133.88px;font-size:9px;line-height:9px;color:#777;font-weight:400;">BOL-TR-IZM-H8</div>
<div class="abs" style="left:1287px;top:196px;width:20px;height:17px;background:#46c046;border-radius:2px"></div>
<div class="t" style="left:1290px;top:199.53px;font-size:10px;line-height:10px;color:#fff;font-weight:400;">Ok</div>
<svg class="abs" style="left:1130px;top:348px" width="56" height="48" viewBox="0 0 56 48">
<path d="M15.7 43 V7 H39.5 V43" fill="none" stroke="#7a7a7a" stroke-width="2.4" stroke-linejoin="round"/>
<rect x="15" y="15" width="25" height="6.5" fill="#959595"/>
<path d="M7 42.6 H49" stroke="#7a7a7a" stroke-width="2.4" stroke-linecap="round"/>
</svg>
<div class="t" style="left:1201px;top:359.00px;font-size:13px;line-height:13px;color:#555;font-weight:700;">Bollard is unlocked</div>
<div class="abs" style="left:1408.5px;top:342.5px;width:167px;height:33px;background:#fbb406;border-radius:3px"></div>
<div class="abs" style="left:1408.5px;top:380px;width:167px;height:33px;background:#fbb406;border-radius:3px"></div>
<div class="abs" style="left:1408.5px;top:417.5px;width:167px;height:33px;background:#84cbec;border-radius:3px"></div>
<div class="abs" style="left:1125px;top:417.5px;width:167px;height:33px;background:#029ede;border-radius:3px"></div>
<div class="t" style="left:1461px;top:354.33px;font-size:10.6px;line-height:10.6px;color:#333;font-weight:700;">Lock raised</div>
<div class="t" style="left:1461px;top:391.33px;font-size:10.6px;line-height:10.6px;color:#333;font-weight:700;">Lock retracted</div>
<div class="t" style="left:1461.5px;top:428.89px;font-size:11px;line-height:11px;color:#e9f6fc;font-weight:400;">Unlock</div>
<div class="t" style="left:1189px;top:430.11px;font-size:10.5px;line-height:10.5px;color:#fff;font-weight:400;">Passage</div>
<svg class="abs" style="left:1415px;top:348px" width="40" height="24" viewBox="0 0 40 24">
<path d="M7.6 20 V2.8 H19.6 V20" fill="none" stroke="#111" stroke-width="1.6"/>
<rect x="7" y="5.6" width="13" height="3.4" fill="#111"/>
<path d="M2.5 20.2 H24.5" stroke="#111" stroke-width="1.6"/>
<path d="M28 9.5 V7.8 Q28 4.6 30.3 4.6 Q32.6 4.6 32.6 7.8 V9.5" fill="none" stroke="#111" stroke-width="1.7"/>
<rect x="25.6" y="9" width="9.5" height="8.6" rx="1.2" fill="#111"/>
<circle cx="30.3" cy="13.1" r="1.1" fill="#fbb406"/>
</svg>
<svg class="abs" style="left:1415px;top:385px" width="40" height="24" viewBox="0 0 40 24">
<path d="M2.5 3.6 H24.5" stroke="#111" stroke-width="1.7"/>
<path d="M7.6 5 V21 H20 V5 M7.6 8.7 H20" fill="none" stroke="#111" stroke-width="1.4" stroke-dasharray="2.2 1.4"/>
<path d="M28 10.5 V8.8 Q28 5.6 30.3 5.6 Q32.6 5.6 32.6 8.8 V10.5" fill="none" stroke="#111" stroke-width="1.7"/>
<rect x="25.6" y="10" width="9.5" height="8.6" rx="1.2" fill="#111"/>
<circle cx="30.3" cy="14.1" r="1.1" fill="#fbb406"/>
</svg>
<svg class="abs" style="left:1420px;top:424px" width="20" height="20" viewBox="0 0 20 20">
<path d="M9.5 8.5 V5.8 Q9.5 3.6 11.8 3.6 Q14 3.6 14 5.8 V6.5" fill="none" stroke="#fff" stroke-width="1.5"/>
<rect x="4.5" y="8.5" width="9.5" height="8.5" rx="1" fill="#fff"/>
<circle cx="9.2" cy="12.7" r="1" fill="#84cbec"/>
</svg>
<div class="t" style="left:1125px;top:483.00px;font-size:13px;line-height:13px;color:#444;font-weight:400;">Snapshot</div>
<div class="t" style="left:1541px;top:482.11px;font-size:10.5px;line-height:10.5px;color:#2e7cb6;font-weight:400;text-decoration:underline">Update</div>
<svg class="abs" style="left:1125px;top:507px" width="450" height="287" viewBox="0 0 450 287">
<defs><filter id="blur1"><feGaussianBlur stdDeviation="1"/></filter><filter id="blur3"><feGaussianBlur stdDeviation="5"/></filter><filter id="noise" x="0" y="0" width="100%" height="100%"><feTurbulence type="fractalNoise" baseFrequency="0.6" numOctaves="2" seed="3"/><feColorMatrix type="matrix" values="0 0 0 0 0.5  0 0 0 0 0.5  0 0 0 0 0.5  0 0 0 1.6 -0.55"/></filter></defs>
<rect x="0" y="0" width="450" height="287" fill="#6b6b6b"/>
<polygon points="0.0,0.0 398.0,0.0 398.0,140.0 205.0,107.0 0.0,71.0" fill="#616161"/>
<polygon points="0.0,33.0 205.0,68.0 398.0,103.0 398.0,133.0 205.0,98.0 0.0,63.0" fill="#6b6b6b" filter="url(#blur3)"/>
<polyline points="65.0,-1.0 205.0,17.2 398.0,43.0" fill="none" stroke="#828282" stroke-width="3.2" filter="url(#blur1)"/>
<polyline points="0.0,74.0 115.0,94.0 205.0,108.0 398.0,141.0" fill="none" stroke="#7a7a7a" stroke-width="3.5" filter="url(#blur1)"/>
<polygon points="0.0,78.0 205.0,113.0 398.0,145.0 398.0,169.0 205.0,135.0 0.0,98.0" fill="#6e6e6e"/>
<polygon points="109.0,113.0 205.0,134.0 398.0,169.0 398.0,181.0 205.0,148.0 109.0,125.0" fill="#5c5c5c" filter="url(#blur1)"/>
<polygon points="0.0,105.0 205.0,148.0 398.0,183.0 398.0,221.0 205.0,181.0 0.0,139.0" fill="#737373"/>
<polygon points="242.0,158.0 311.0,161.0 325.0,173.0 255.0,171.0" fill="#878787" filter="url(#blur1)"/>
<polygon points="0.0,138.0 75.0,156.0 205.0,181.0 398.0,213.0 398.0,231.0 205.0,198.0 75.0,174.0 0.0,156.0" fill="#979797" filter="url(#blur1)"/>
<polygon points="123.0,195.0 225.0,201.0 235.0,218.0 137.0,213.0" fill="#8c8c8c" filter="url(#blur1)"/>
<polygon points="121.0,203.0 205.0,211.0 200.0,220.0 125.0,215.0" fill="#5e5e5e" filter="url(#blur1)"/>
<polygon points="343.0,217.0 398.0,221.0 398.0,263.0 370.0,245.0" fill="#9a9a9a" filter="url(#blur1)"/>
<polygon points="0.0,163.0 205.0,208.0 398.0,238.0 398.0,287.0 0.0,287.0" fill="#686868"/>
<polygon points="0.0,233.0 125.0,253.0 175.0,287.0 0.0,287.0" fill="#636363" filter="url(#blur3)"/>
<path d="M110.6 119.0 L112.8 109.5 L115.2 119.0 Z" fill="#35302b"/>
<path d="M122.9 121.3 L125.1 111.8 L127.5 121.3 Z" fill="#35302b"/>
<path d="M135.3 123.7 L137.5 114.2 L139.9 123.7 Z" fill="#35302b"/>
<path d="M147.6 126.0 L149.8 116.5 L152.2 126.0 Z" fill="#35302b"/>
<path d="M160.0 128.4 L162.2 118.9 L164.6 128.4 Z" fill="#35302b"/>
<path d="M172.3 130.7 L174.5 121.2 L176.9 130.7 Z" fill="#35302b"/>
<path d="M184.7 133.1 L186.9 123.6 L189.3 133.1 Z" fill="#35302b"/>
<path d="M197.0 135.4 L199.2 125.9 L201.6 135.4 Z" fill="#35302b"/>
<path d="M209.4 137.8 L211.6 128.3 L214.0 137.8 Z" fill="#35302b"/>
<path d="M221.7 140.1 L223.9 130.6 L226.3 140.1 Z" fill="#35302b"/>
<path d="M234.1 142.5 L236.3 133.0 L238.7 142.5 Z" fill="#35302b"/>
<path d="M246.4 144.8 L248.6 135.3 L251.0 144.8 Z" fill="#35302b"/>
<path d="M258.8 147.2 L261.0 137.7 L263.4 147.2 Z" fill="#35302b"/>
<path d="M295.8 154.2 L298.0 144.7 L300.4 154.2 Z" fill="#35302b"/>
<path d="M308.2 156.6 L310.4 147.1 L312.8 156.6 Z" fill="#35302b"/>
<path d="M320.5 158.9 L322.7 149.4 L325.1 158.9 Z" fill="#35302b"/>
<path d="M332.9 161.3 L335.1 151.8 L337.5 161.3 Z" fill="#35302b"/>
<path d="M345.2 163.6 L347.4 154.1 L349.8 163.6 Z" fill="#35302b"/>
<path d="M357.6 166.0 L359.8 156.5 L362.2 166.0 Z" fill="#35302b"/>
<path d="M369.9 168.3 L372.1 158.8 L374.5 168.3 Z" fill="#35302b"/>
<path d="M382.3 170.7 L384.5 161.2 L386.9 170.7 Z" fill="#35302b"/>
<path d="M394.6 173.0 L396.8 163.5 L399.2 173.0 Z" fill="#35302b"/>
<rect x="0" y="0" width="450" height="287" filter="url(#noise)" opacity="0.35"/>
<rect x="0" y="0" width="56" height="48" fill="#020304"/>
<rect x="398" y="0" width="52" height="287" fill="#020304"/>
</svg>
</body></html>
